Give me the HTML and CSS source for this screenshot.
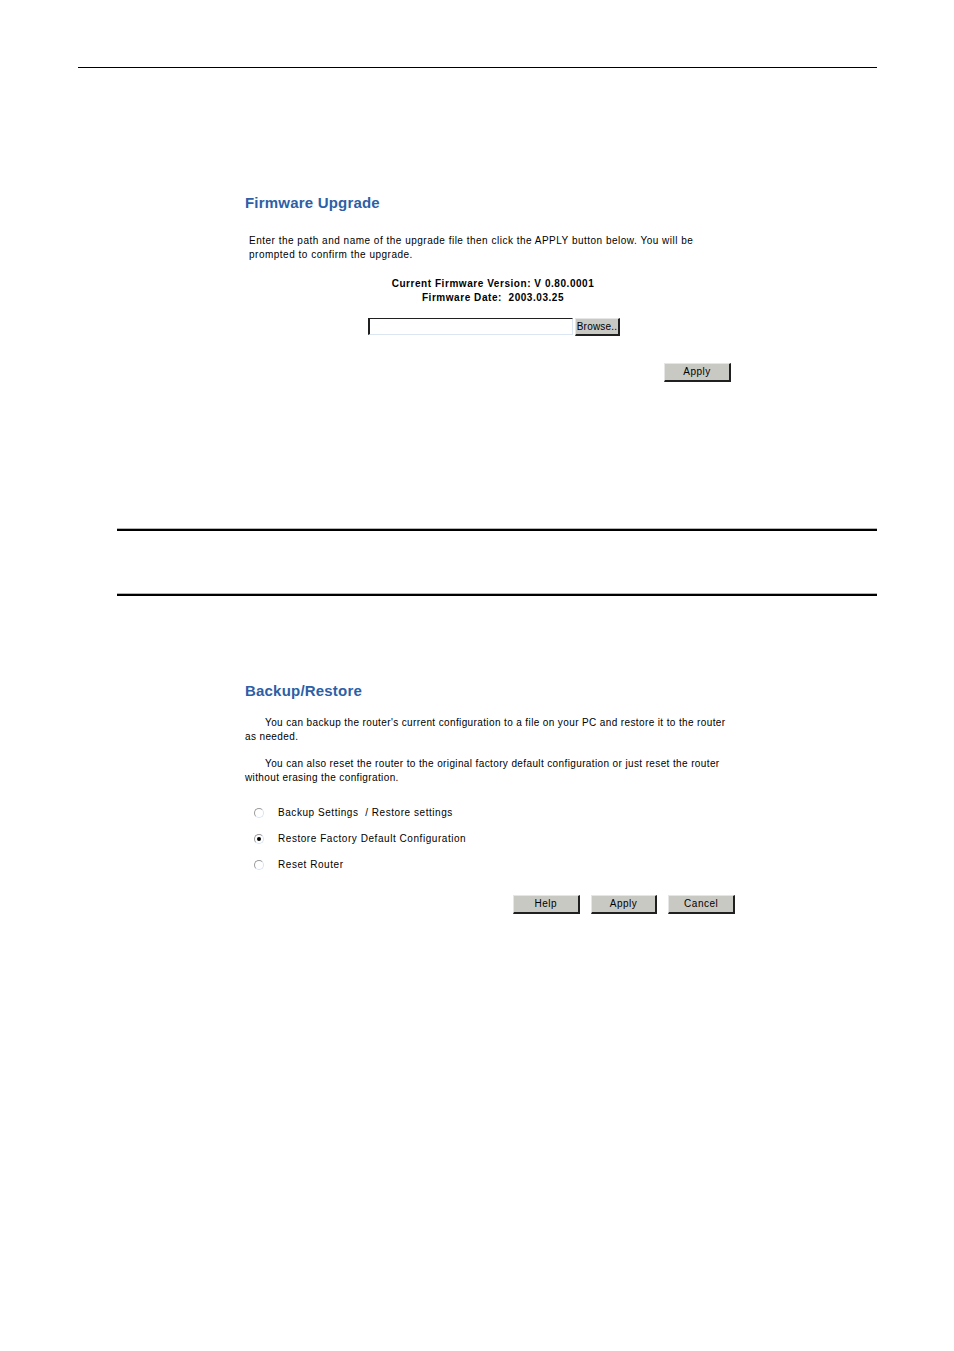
FILE: index.html
```html
<!DOCTYPE html>
<html>
<head>
<meta charset="utf-8">
<link rel="stylesheet" href="styles.css">
</head>
<body>
<div class="page">
  <div class="rule-top"></div>

  <section class="fw">
    <h2 class="title">Firmware Upgrade</h2>
    <p class="text">Enter the path and name of the upgrade file then click the APPLY button below. You will be prompted to confirm the upgrade.</p>
    <div class="info">
      <div>Current Firmware Version: V 0.80.0001</div>
      <div>Firmware Date:&nbsp; 2003.03.25</div>
    </div>
    <div class="filerow">
      <span class="file"></span><span class="btn browse">Browse..</span>
    </div>
    <div class="applyrow">
      <span class="btn">Apply</span>
    </div>
  </section>

  <div class="sep sep1"></div>
  <div class="sep sep2"></div>

  <section class="br">
    <h2 class="title">Backup/Restore</h2>
    <p class="text indent">You can backup the router's current configuration to a file on your PC and restore it to the router as needed.</p>
    <p class="text indent para2">You can also reset the router to the original factory default configuration or just reset the router without erasing the configration.</p>
    <ul class="opts">
      <li><span class="radio"></span><span>Backup Settings&nbsp; / Restore settings</span></li>
      <li><span class="radio checked"></span><span>Restore Factory Default Configuration</span></li>
      <li><span class="radio"></span><span>Reset Router</span></li>
    </ul>
    <div class="btnrow">
      <span class="btn">Help</span>
      <span class="btn">Apply</span>
      <span class="btn">Cancel</span>
    </div>
  </section>
</div>
</body>
</html>
```
FILE: styles.css
```css
html, body {
  margin: 0;
  padding: 0;
  background: #fff;
}
body {
  font-family: "Liberation Sans", Arial, sans-serif;
  color: #000;
}
.page {
  width: 954px;
  height: 1351px;
  padding-top: 67px;
  box-sizing: border-box;
}
.rule-top {
  height: 1px;
  background: #000;
  margin-left: 78px;
  width: 799px;
}
.fw {
  margin-left: 245px;
  width: 490px;
  padding-top: 126px;
}
.title {
  margin: 0;
  font-size: 15px;
  line-height: 18px;
  font-weight: bold;
  letter-spacing: 0.2px;
  color: #2d5fa6;
}
.text {
  margin: 0;
  font-size: 10px;
  line-height: 14px;
  letter-spacing: 0.5px;
}
.fw .text {
  margin-top: 22px;
  padding-left: 4px;
  width: 460px;
}
.info {
  margin-top: 15px;
  margin-left: 0;
  width: 496px;
  text-align: center;
  font-size: 10px;
  line-height: 14px;
  font-weight: bold;
  letter-spacing: 0.55px;
}
.filerow {
  margin-top: 13px;
  margin-left: 123px;
  display: flex;
  align-items: flex-start;
  gap: 2px;
}
.file {
  display: block;
  width: 202px;
  height: 15px;
  border-style: solid;
  border-width: 1px 1px 1px 2px;
  border-color: #202020 #dbe6f2 #dbe6f2 #202020;
}
.btn {
  display: inline-flex;
  align-items: center;
  justify-content: center;
  box-sizing: border-box;
  width: 67px;
  height: 19px;
  font-size: 10px;
  letter-spacing: 0.5px;
  background: #c9c9c4;
  border-style: solid;
  border-width: 1px 2px 2px 1px;
  border-color: #e6e6e6 #202020 #202020 #e6e6e6;
}
.browse {
  width: 45px;
  height: 18px;
  letter-spacing: 0.2px;
}
.applyrow {
  margin-top: 25px;
  margin-left: 419px;
}
.sep {
  margin-left: 117px;
  width: 760px;
  height: 3px;
  box-sizing: border-box;
  border-top: 1px solid #b4b4b4;
  background: #000;
}
.sep1 {
  margin-top: 146px;
}
.sep2 {
  margin-top: 62px;
}
.br {
  margin-left: 245px;
  width: 490px;
  padding-top: 86px;
}
.br .text {
  margin-top: 0;
  letter-spacing: 0.38px;
}
.br .title {
  margin-bottom: 16px;
}
.indent {
  text-indent: 20px;
}
.para2 {
  margin-top: 13px !important;
}
.opts {
  list-style: none;
  margin: 15px 0 0 0;
  padding: 0;
}
.opts li {
  display: flex;
  align-items: center;
  height: 26px;
  font-size: 10px;
  letter-spacing: 0.55px;
}
.radio {
  display: inline-block;
  box-sizing: border-box;
  width: 10px;
  height: 10px;
  border-radius: 50%;
  border: 1px solid #9a9a9a;
  border-right-color: #d8e4f4;
  border-bottom-color: #d8e4f4;
  margin-left: 9px;
  margin-right: 14px;
  position: relative;
}
.radio.checked::after {
  content: "";
  position: absolute;
  left: 2px;
  top: 2px;
  width: 4px;
  height: 4px;
  border-radius: 50%;
  background: #000;
}
.btnrow {
  margin-top: 17px;
  margin-left: 268px;
  display: flex;
  gap: 11px;
}
```
